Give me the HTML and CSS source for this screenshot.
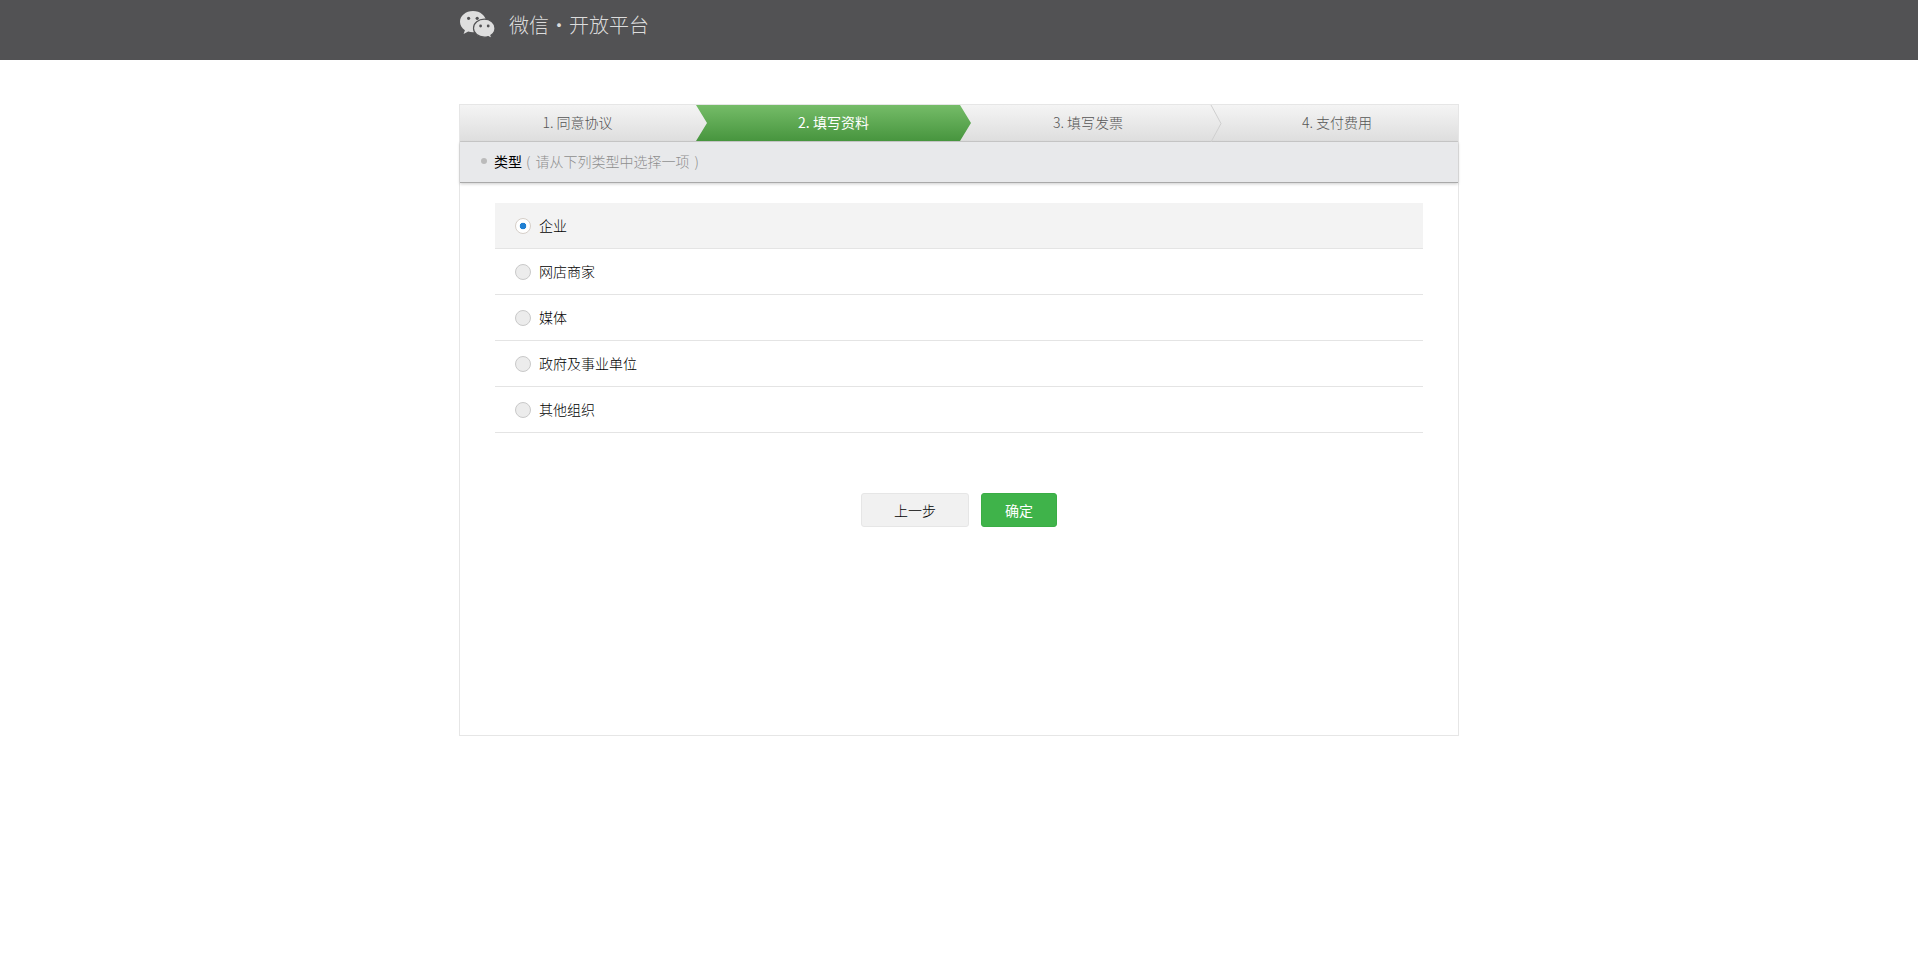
FILE: index.html
```html
<!DOCTYPE html>
<html lang="zh-CN">
<head>
<meta charset="utf-8">
<title>微信・开放平台</title>
<link rel="stylesheet" href="styles.css">
</head>
<body>
<header class="topbar">
  <div class="topbar-inner">
    <svg class="logo" viewBox="0 0 36 28" width="36" height="28" aria-hidden="true">
      <path class="logo-big" d="M13 0C5.8 0 0 4.8 0 10.8c0 3.4 1.9 6.4 4.9 8.4L3.6 23l4.6-2.4c1.5.4 3.1.7 4.8.7 7.2 0 13-4.7 13-10.5C26 4.8 20.2 0 13 0z"/>
      <circle class="logo-eye" cx="8.6" cy="7.3" r="1.6"/>
      <circle class="logo-eye" cx="17.2" cy="7.3" r="1.6"/>
      <path class="logo-small" d="M24.4 8.2c-6 0-10.9 4-10.9 9s4.9 9 10.9 9c1.3 0 2.6-.2 3.8-.6l3.7 2-1-3.3c2.5-1.7 4.1-4.2 4.1-7.1 0-5-4.7-9-10.6-9z"/>
      <circle class="logo-eye" cx="20.6" cy="15" r="1.4"/>
      <circle class="logo-eye" cx="28.2" cy="15" r="1.4"/>
    </svg>
    <span class="brand">微信・开放平台</span>
  </div>
</header>

<main class="panel">
  <ol class="steps">
    <li class="step step-1">1. 同意协议</li>
    <li class="step step-2">2. 填写资料</li>
    <li class="step step-3">3. 填写发票</li>
    <li class="step step-4">
      <svg class="chevron" viewBox="0 0 12 37" width="12" height="37" aria-hidden="true">
        <path d="M1 0l10 18.5L1 37"/>
      </svg>
      4. 支付费用
    </li>
  </ol>

  <div class="subhead">
    <i class="dot"></i><strong class="subhead-title">类型</strong><span class="subhead-hint">( 请从下列类型中选择一项 )</span>
  </div>

  <ul class="options">
    <li class="option option-selected"><i class="radio radio-on"></i>企业</li>
    <li class="option"><i class="radio"></i>网店商家</li>
    <li class="option"><i class="radio"></i>媒体</li>
    <li class="option"><i class="radio"></i>政府及事业单位</li>
    <li class="option"><i class="radio"></i>其他组织</li>
  </ul>

  <div class="actions">
    <button class="btn btn-prev" type="button">上一步</button>
    <button class="btn btn-ok" type="button">确定</button>
  </div>
</main>
</body>
</html>
```

FILE: styles.css
```css
* {
  box-sizing: border-box;
}

html,
body {
  margin: 0;
  padding: 0;
  background: #fff;
}

body {
  font-family: "Noto Sans CJK SC", "Noto Sans", sans-serif;
  font-size: 14px;
  font-weight: 300;
  color: #000;
}

ol,
ul {
  list-style: none;
  margin: 0;
  padding: 0;
}

.topbar {
  height: 60px;
  background: #525254;
}

.topbar-inner {
  width: 1000px;
  height: 50px;
  margin: 0 auto;
  padding-left: 1px;
  display: flex;
  align-items: center;
  gap: 13px;
}

.logo {
  display: block;
  flex: none;
}

.logo-big,
.logo-small {
  fill: #dedede;
}

.logo-small {
  stroke: #525254;
  stroke-width: 1.2;
}

.logo-eye {
  fill: #525254;
}

.brand {
  font-size: 20px;
  line-height: 28px;
  color: #dcdcdc;
  font-weight: 300;
}

.panel {
  width: 1000px;
  height: 632px;
  margin: 44px auto 0;
  border: 1px solid #e6e6e6;
}

.steps {
  display: flex;
  height: 37px;
  border-bottom: 1px solid #cbcbcb;
  background: linear-gradient(#f4f4f4, #dedede);
}

.step {
  height: 36px;
  line-height: 34px;
  text-align: center;
  color: #555;
  flex: none;
}

.step-1 {
  width: 235px;
  margin-right: 1px;
}

.step-2 {
  width: 275px;
  margin-right: -11px;
  position: relative;
  z-index: 1;
  color: #fff;
  font-weight: 400;
  background: linear-gradient(#75bc68, #47953e);
  clip-path: polygon(0 0, 264px 0, 100% 50%, 264px 100%, 0 100%, 11px 50%);
}

.step-3 {
  width: 256px;
}

.step-4 {
  width: 242px;
  position: relative;
}

.chevron {
  position: absolute;
  left: -6px;
  top: 0;
}

.chevron path {
  fill: none;
  stroke: #cfcfcf;
  stroke-width: 1;
}

.subhead {
  height: 41px;
  padding: 0 0 2px 21px;
  display: flex;
  align-items: center;
  background: #e8e9eb;
  border-bottom: 1px solid #a9a9a9;
  box-shadow: 0 1px 3px rgba(0, 0, 0, 0.2);
}

.dot {
  width: 6px;
  height: 6px;
  border-radius: 50%;
  background: #bbb;
  margin-right: 7px;
}

.subhead-title {
  font-weight: 400;
  color: #000;
}

.subhead-hint {
  color: #8e8e8e;
  margin-left: 4px;
  word-spacing: 2px;
}

.options {
  margin: 20px 35px 0 35px;
}

.option {
  height: 46px;
  padding: 0 0 2px 20px;
  display: flex;
  align-items: center;
  gap: 8px;
  border-bottom: 1px solid #e4e4e4;
}

.option-selected {
  background: #f3f3f3;
}

.radio {
  width: 16px;
  height: 16px;
  margin-top: 2px;
  border-radius: 50%;
  border: 1px solid #c9c9c9;
  background: #ececec;
  flex: none;
}

.radio-on {
  background: radial-gradient(circle, #2180d2 0, #2180d2 3px, #fff 3.6px);
  border-color: #d6cfc9;
}

.actions {
  display: flex;
  justify-content: center;
  gap: 12px;
  margin-top: 60px;
}

.btn {
  height: 34px;
  padding: 0;
  border-radius: 3px;
  font-family: inherit;
  font-size: 14px;
  font-weight: 300;
  line-height: 32px;
}

.btn-prev {
  width: 108px;
  background: #f1f1f1;
  border: 1px solid #e6e6e6;
  color: #000;
}

.btn-ok {
  width: 76px;
  background: #3fb34a;
  border: 1px solid #3aad45;
  color: #fff;
  font-weight: 400;
}
```
